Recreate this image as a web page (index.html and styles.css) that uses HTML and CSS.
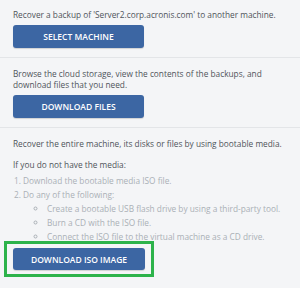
FILE: index.html
```html
<!DOCTYPE html>
<html lang="en">
<head>
    <meta charset="UTF-8">
    <title>Recovery options</title>
    <link rel="stylesheet" href="styles.css">
</head>
<body>
    <div class="section">
        <p>Recover a backup of 'Server2.corp.acronis.com' to another machine.</p>
        <button class="btn">Select machine</button>
    </div>

    <div class="section">
        <p>Browse the cloud storage, view the contents of the backups, and download files that you need.</p>
        <button class="btn">Download files</button>
    </div>

    <div class="section">
        <p>Recover the entire machine, its disks or files by using bootable media.</p>
        <p class="media-note">If you do not have the media:</p>
        <ol class="steps">
            <li>Download the bootable media ISO file.</li>
            <li>Do any of the following:
                <ul class="options">
                    <li>Create a bootable USB flash drive by using a third-party tool.</li>
                    <li>Burn a CD with the ISO file.</li>
                    <li>Connect the ISO file to the virtual machine as a CD drive.</li>
                </ul>
            </li>
        </ol>
        <div class="highlight">
            <button class="btn">Download ISO image</button>
        </div>
    </div>
</body>
</html>
```

FILE: styles.css
```css
body {
    margin: 0;
    font-family: 'Open Sans', sans-serif;
    font-size: 8.3px;
    line-height: 11px;
    color: #4f545a;
    background-color: #f4f5f7;
}
p { margin: 0 0 5px; }
.section {
    padding: 10px 6px 9px 13px;
    border-bottom: 1px solid #e3e5e8;
}
.section:first-child { padding-top: 9px; }
.section:last-child { border-bottom: none; }
.btn {
    display: block;
    width: 131px;
    height: 23px;
    padding: 0;
    border: none;
    border-radius: 3px;
    background-color: #3c66a3;
    box-shadow: 0 1px 1px rgba(0, 0, 0, 0.15);
    color: #fff;
    font-family: 'Open Sans', sans-serif;
    font-size: 8.5px;
    font-weight: 600;
    text-transform: uppercase;
}
.media-note { margin: 10px 0 4px; }
.steps {
    margin: 0;
    padding-left: 10px;
    color: #aab0b6;
    line-height: 14px;
}
.options {
    margin: 0;
    padding-left: 24px;
    list-style-type: circle;
}
.highlight {
    position: relative;
    width: 132px;
    margin-top: 4px;
}
.highlight .btn { width: 132px; height: 22px; }
.highlight::after {
    content: "";
    position: absolute;
    top: -7px;
    left: -9px;
    right: -9px;
    bottom: -7px;
    border: 3px solid #2db34b;
}
```
